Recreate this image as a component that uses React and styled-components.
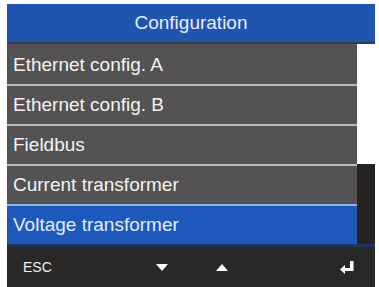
import React from 'react';
import styled, { createGlobalStyle } from 'styled-components';

const Global = createGlobalStyle`
  html, body {
    margin: 0;
    padding: 0;
    background: #ffffff;
  }
  body {
    font-family: "Liberation Sans", Arial, sans-serif;
  }
`;

const Screen = styled.div`
  width: 368px;
  height: 283px;
  margin: 4px 0 0 7px;
  display: flex;
  flex-direction: column;
  background: #2a2727;
`;

const Header = styled.header`
  height: 38px;
  background: #1f55b1;
  border-bottom: 2px solid #3a3a3c;
  display: flex;
  align-items: center;
  justify-content: center;
  color: #e6eefa;
  font-size: 19px;
`;

const Body = styled.div`
  display: flex;
  flex: none;
`;

const List = styled.ul`
  list-style: none;
  margin: 0;
  padding: 0;
  width: 350px;
`;

const Row = styled.li`
  height: 38px;
  display: flex;
  align-items: center;
  padding-left: 6px;
  font-size: 19px;
  color: ${(p) => (p.$active ? '#e4ecfa' : '#f2f2f2')};
  background: ${(p) => (p.$active ? '#1d59bd' : '#545252')};
  border-top: 2px solid ${(p) => (p.$first ? '#545252' : p.$active ? '#8fb2e6' : '#b9b9b9')};
`;

const Scroll = styled.div`
  flex: 1;
  background: #262222;
  display: flex;
  flex-direction: column;
`;

const Thumb = styled.div`
  height: 120px;
  background: #ffffff;
`;

const Footer = styled.footer`
  flex: 1;
  border-top: 3px solid #1c3560;
  display: flex;
  align-items: center;
  padding: 0 21px 0 16px;
  color: #f0f0f0;
  font-size: 14px;
`;

const Key = styled.div`
  width: ${(p) => p.$w}px;
  display: flex;
  justify-content: ${(p) => p.$align || 'center'};
`;

const Tri = ({ up }) => (
  <svg width="12" height="7" viewBox="0 0 12 7">
    <polygon points={up ? '6,0 12,7 0,7' : '0,0 12,0 6,7'} fill="#ffffff" />
  </svg>
);

const Enter = () => (
  <svg width="14" height="13" viewBox="0 0 14 13">
    <path d="M10 0 H13.5 V10 H5 V13 L0 8.5 L5 4 V7 H10 Z" fill="#ffffff" />
  </svg>
);

const items = [
  'Ethernet config. A',
  'Ethernet config. B',
  'Fieldbus',
  'Current transformer',
  'Voltage transformer',
];

export default function App() {
  return (
    <>
      <Global />
      <Screen>
        <Header>Configuration</Header>
        <Body>
          <List>
            {items.map((t, i) => (
              <Row key={t} $first={i === 0} $active={i === 4}>
                {t}
              </Row>
            ))}
          </List>
          <Scroll>
            <Thumb />
          </Scroll>
        </Body>
        <Footer>
          <Key $w={114} $align="flex-start">ESC</Key>
          <Key $w={50}><Tri /></Key>
          <Key $w={70}><Tri up /></Key>
          <Key $w={97} $align="flex-end"><Enter /></Key>
        </Footer>
      </Screen>
    </>
  );
}
